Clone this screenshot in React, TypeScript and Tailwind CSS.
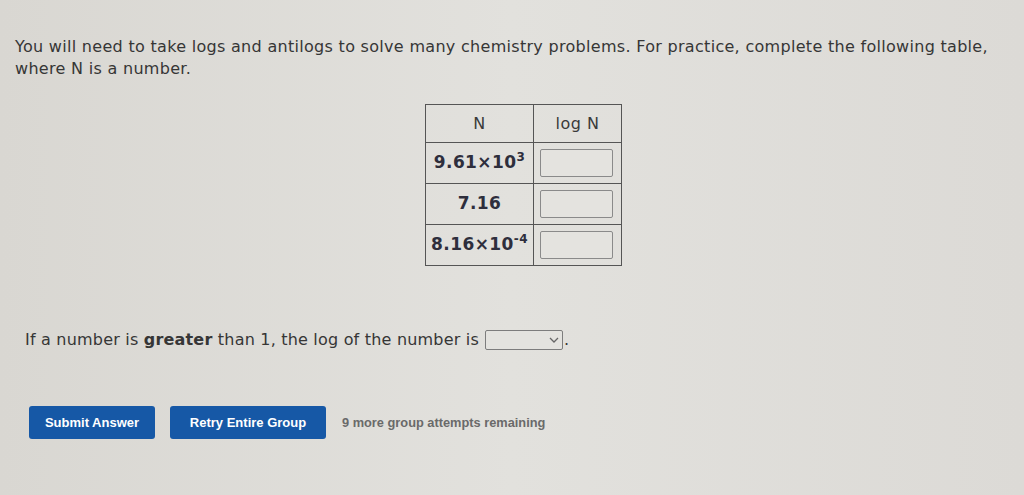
import React from "react";

export default function App() {
  const rows = [
    { base: "9.61×10", exp: "3" },
    { base: "7.16", exp: "" },
    { base: "8.16×10", exp: "-4" },
  ];
  return (
    <div
      className="w-[1024px] h-[495px] overflow-hidden bg-gradient-to-r from-[#d9d7d2] via-[#e2e1dd] to-[#dcdad6] text-[#363636]"
      style={{ fontFamily: '"DejaVu Sans", Verdana, sans-serif' }}
    >
      <div className="pl-[15px] pr-[12px] pt-[36px] text-[16px] leading-[22px] tracking-[0.3px]">
        You will need to take logs and antilogs to solve many chemistry problems. For practice, complete the following table, where N is a number.
      </div>

      <div className="pl-[425px] pt-[24px]">
        <table className="border-collapse border border-[#555]">
          <thead>
            <tr className="h-[38px]">
              <th className="w-[108px] border border-[#555] font-normal text-[16px] tracking-[0.5px] text-[#3a3a3a]">N</th>
              <th className="w-[88px] border border-[#555] font-normal text-[16px] tracking-[0.5px] text-[#3a3a3a]">log N</th>
            </tr>
          </thead>
          <tbody>
            {rows.map((r, i) => (
              <tr key={i} className="h-[41px]">
                <td className="border border-[#555] text-center font-bold text-[17px] tracking-[0.4px] text-[#2e2e3c] px-[4px] whitespace-nowrap">
                  {r.base}
                  {r.exp && <sup className="text-[12px] relative -top-[7px] align-baseline">{r.exp}</sup>}
                </td>
                <td className="border border-[#555] px-[6px]">
                  <div className="w-[73px] h-[28px] border border-[#8a8a8a] rounded-[2px] bg-[#e4e3df]" />
                </td>
              </tr>
            ))}
          </tbody>
        </table>
      </div>

      <div className="pl-[25px] pt-[62px] text-[16px] tracking-[0.2px] flex items-center">
        <span>
          If a number is <b>greater</b> than 1, the log of the number is
        </span>
        <span className="ml-[6px] inline-flex items-center justify-end w-[78px] h-[20px] border border-[#7d7d7d] rounded-[2px] bg-[#e4e3df] pr-[3px]">
          <svg width="10" height="7" viewBox="0 0 10 7">
            <path d="M1 1 L5 5 L9 1" fill="none" stroke="#666" strokeWidth="1.3" />
          </svg>
        </span>
        <span className="ml-[1px]">.</span>
      </div>

      <div
        className="pl-[29px] pt-[54px] flex items-center gap-[15px]"
        style={{ fontFamily: '"Liberation Sans", Arial, sans-serif' }}
      >
        <button className="w-[126px] h-[33px] rounded-[3px] bg-[#1658a6] text-white font-bold text-[13px]">
          Submit Answer
        </button>
        <button className="w-[156px] h-[33px] rounded-[3px] bg-[#1658a6] text-white font-bold text-[13px]">
          Retry Entire Group
        </button>
        <span className="ml-[1px] text-[12.8px] font-bold text-[#6a6a6a]">9 more group attempts remaining</span>
      </div>
    </div>
  );
}
